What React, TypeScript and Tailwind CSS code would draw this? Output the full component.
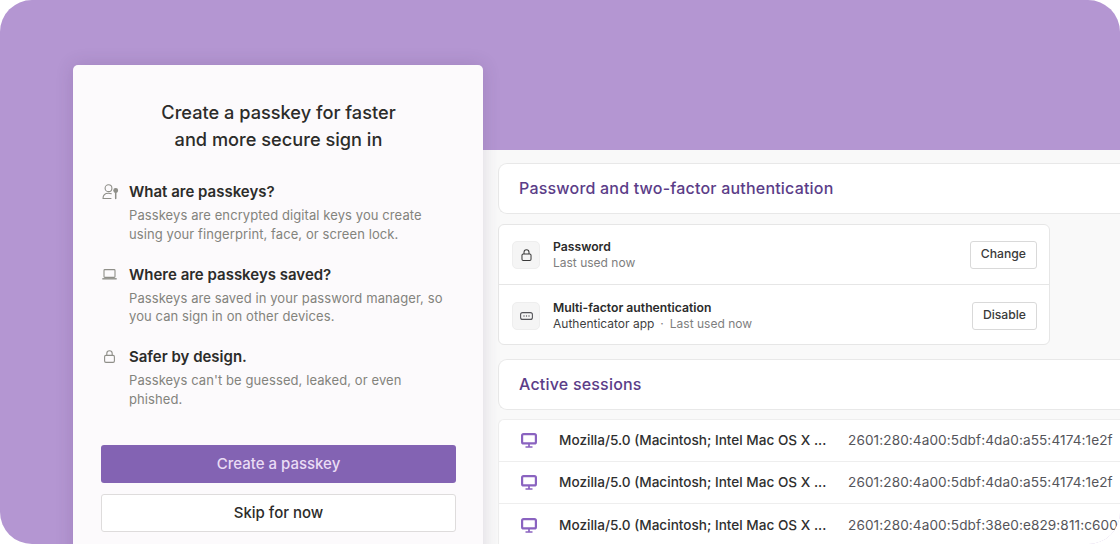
import React from "react";

const font = "font-['Inter',sans-serif]";

function UserKey() {
  return (
    <svg width="17" height="16" viewBox="0 0 17 16" fill="none" stroke="#8f8f89" strokeWidth="1.1" strokeLinecap="round" strokeLinejoin="round">
      <circle cx="6.5" cy="4.2" r="3.4" />
      <path d="M1 14.5c0-3.3 2.3-5.3 5.5-5.3 1 0 2 .2 2.8.6M1 14.5h8" />
      <circle cx="13.7" cy="6.5" r="1.9" fill="#8f8f89" />
      <path d="M13.7 8v6.5" strokeWidth="1.5" />
    </svg>
  );
}

function Laptop() {
  return (
    <svg width="15" height="11" viewBox="0 0 15 11" fill="none" stroke="#8f8f89" strokeWidth="1.1">
      <rect x="2" y="0.6" width="11" height="7.8" rx="0.8" />
      <path d="M.3 9.8h14.4" strokeWidth="1.4" />
    </svg>
  );
}

function Lock({ color = "#8f8f89", w = 11, h = 13 }: { color?: string; w?: number; h?: number }) {
  return (
    <svg width={w} height={h} viewBox="0 0 11 13" fill="none" stroke={color} strokeWidth="1.1">
      <rect x="0.6" y="5.4" width="9.8" height="7" rx="1.3" />
      <path d="M2.8 5.4V3.4a2.7 2.7 0 0 1 5.4 0v2" />
    </svg>
  );
}

function Dots() {
  return (
    <svg width="13" height="8" viewBox="0 0 13 8" fill="none">
      <rect x="0.6" y="0.6" width="11.8" height="6.8" rx="2" stroke="#55555a" strokeWidth="1.1" />
      <circle cx="4" cy="4" r="0.7" fill="#55555a" />
      <circle cx="6.5" cy="4" r="0.7" fill="#55555a" />
      <circle cx="9" cy="4" r="0.7" fill="#55555a" />
    </svg>
  );
}

function Monitor() {
  return (
    <svg width="16" height="15" viewBox="0 0 16 15" fill="none" stroke="#8a63c0" strokeWidth="2.2">
      <rect x="1.1" y="1.1" width="13.8" height="9.3" rx="1.5" />
      <path d="M8 11v2.5M4.5 14h7" strokeWidth="1.7" />
    </svg>
  );
}

function Faq({ icon, title, lines, iconClass }: { icon: React.ReactNode; title: string; lines: string[]; iconClass: string }) {
  return (
    <div className="flex">
      <div className={`w-[28px] shrink-0 ${iconClass}`}>{icon}</div>
      <div>
        <div className="text-[15px] leading-[20px] font-semibold text-[#2c2c2a]">{title}</div>
        <div className="mt-[4px] text-[13px] leading-[18.5px] tracking-[0.09px] text-[#83837d]">
          {lines.map((l) => (
            <div key={l}>{l}</div>
          ))}
        </div>
      </div>
    </div>
  );
}

function SecurityRow({ icon, title, sub, action, rowClass }: { icon: React.ReactNode; title: string; sub: React.ReactNode; action: string; rowClass: string }) {
  return (
    <div className={`flex items-center pl-[13px] pr-[12px] ${rowClass}`}>
      <div className="w-[28px] h-[28px] rounded-[5px] bg-[#f5f5f5] border border-[#eeeeee] flex items-center justify-center">{icon}</div>
      <div className="ml-[13px] flex-1">
        <div className="text-[12.2px] leading-[15px] font-semibold text-[#2b2b2b]">{title}</div>
        <div className="mt-[1px] text-[12px] leading-[16px] text-[#7e7e7e]">{sub}</div>
      </div>
      <div className="h-[28px] px-[10px] flex items-center rounded-[3px] bg-white border border-[#d9d9d9] text-[12.2px] font-medium text-[#3a3a3a]">{action}</div>
    </div>
  );
}

function SectionHead({ title }: { title: string }) {
  return (
    <div className="h-[51px] ml-[15px] pb-[2px] flex items-center pl-[20px] rounded-l-[9px] bg-white border border-r-0 border-[#e8e8e8] text-[16px] tracking-[0.2px] font-medium text-[#5b3d88]">
      {title}
    </div>
  );
}

function Session({ ip, border }: { ip: string; border?: boolean }) {
  return (
    <div className={`flex items-center h-[42px] pl-[22px] ${border ? "border-b border-[#eeeeee]" : ""}`}>
      <Monitor />
      <div className="ml-[22px] w-[289px] text-[13.6px] font-medium text-[#2f2f2f] whitespace-nowrap">Mozilla/5.0 (Macintosh; Intel Mac OS X ...</div>
      <div className="text-[13.6px] tracking-[0.1px] text-[#55555a] whitespace-nowrap">{ip}</div>
    </div>
  );
}

export default function App() {
  return (
    <div className="bg-white w-[1120px] h-[544px]">
      <div className={`${font} w-[1120px] h-[544px] rounded-[32px] overflow-hidden bg-[#b496d2] flex pl-[73px]`}>
        <div className="relative z-10 w-[410px] h-[500px] mt-[65px] shrink-0 rounded-[5px] bg-[#fcfafc] shadow-[0_0_18px_rgba(60,40,90,0.16)] pl-[28px] pr-[27px] pt-[34px]">
          <h1 className="text-center text-[18.2px] leading-[27px] font-medium text-[#2c2c2a]">
            Create a passkey for faster
            <br />
            and more secure sign in
          </h1>
          <div className="mt-[29px] flex flex-col gap-[21.5px]">
            <Faq icon={<UserKey />} iconClass="pt-[2px] pl-[1px]" title="What are passkeys?" lines={["Passkeys are encrypted digital keys you create", "using your fingerprint, face, or screen lock."]} />
            <Faq icon={<Laptop />} iconClass="pt-[4px] pl-[1px]" title="Where are passkeys saved?" lines={["Passkeys are saved in your password manager, so", "you can sign in on other devices."]} />
            <Faq icon={<Lock />} iconClass="pt-[3px] pl-[3px]" title="Safer by design." lines={["Passkeys can't be guessed, leaked, or even", "phished."]} />
          </div>
          <div className="mt-[37px] h-[38px] pt-[1px] rounded-[3px] bg-[#8363b3] flex items-center justify-center text-[15px] font-medium text-[#eadcf5]">Create a passkey</div>
          <div className="mt-[11px] h-[38px] pt-[1px] rounded-[3px] bg-white border border-[#dedcdc] flex items-center justify-center text-[15px] font-medium text-[#2c2c2a]">Skip for now</div>
        </div>
        <div className="flex-1 mt-[150px] h-[394px] bg-[#f9f9f9] pt-[13px]">
          <SectionHead title="Password and two-factor authentication" />
          <div className="ml-[15px] w-[552px] mt-[10px] rounded-[6px] bg-white border border-[#e6e6e6]">
            <SecurityRow rowClass="h-[60px] border-b border-[#e6e6e6]" icon={<Lock color="#3a3a3a" w={11} h={12} />} title="Password" sub="Last used now" action="Change" />
            <SecurityRow
              rowClass="h-[59px] pt-[2px]"
              icon={<Dots />}
              title="Multi-factor authentication"
              sub={
                <span>
                  <span className="text-[#3f3f3f]">Authenticator app</span>
                  <span className="mx-[6px]">·</span>
                  <span>Last used now</span>
                </span>
              }
              action="Disable"
            />
          </div>
          <div className="mt-[14px]">
            <SectionHead title="Active sessions" />
          </div>
          <div className="ml-[15px] mt-[9px] rounded-tl-[6px] bg-white border-t border-l border-[#eeeeee]">
            <Session ip="2601:280:4a00:5dbf:4da0:a55:4174:1e2f" border />
            <Session ip="2601:280:4a00:5dbf:4da0:a55:4174:1e2f" border />
            <Session ip="2601:280:4a00:5dbf:38e0:e829:811:c600" />
          </div>
        </div>
      </div>
    </div>
  );
}
